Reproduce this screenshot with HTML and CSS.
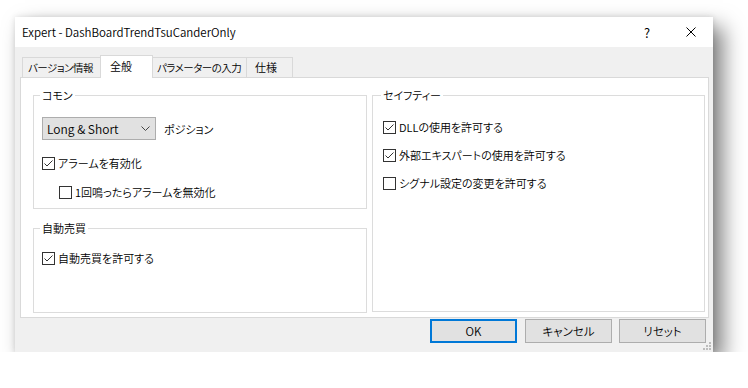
FILE: index.html
```html
<!DOCTYPE html>
<html lang="ja">
<head>
  <meta charset="UTF-8" />
  <title>Expert - DashBoardTrendTsuCanderOnly</title>
  <link rel="stylesheet" href="styles.css">
</head>
<body>
  <div class="dialog">
    <div class="titlebar">
      <span class="title">Expert - DashBoardTrendTsuCanderOnly</span>
      <span class="tb-btn help">?</span>
      <span class="tb-btn close">
        <svg width="10" height="10" viewBox="0 0 10 10"><path d="M0.5 0.5L9.5 9.5M9.5 0.5L0.5 9.5" stroke="#000" stroke-width="1" fill="none"/></svg>
      </span>
    </div>

    <div class="content">
      <div class="tabs">
        <div class="tab tab-version">バージョン情報</div>
        <div class="tab tab-general active">全般</div>
        <div class="tab tab-params">パラメーターの入力</div>
        <div class="tab tab-spec">仕様</div>
      </div>

      <div class="panel">
        <div class="col">
          <div class="group common">
            <div class="group-title">コモン</div>
            <div class="select-row">
              <div class="select">
                <span>Long &amp; Short</span>
                <svg width="9" height="5" viewBox="0 0 9 5"><path d="M0.5 0.5L4.5 4.5L8.5 0.5" stroke="#444" stroke-width="1" fill="none"/></svg>
              </div>
              <span>ポジション</span>
            </div>
            <label class="check row-alarm"><span class="box on"></span>アラームを有効化</label>
            <label class="check row-sub"><span class="box"></span>1回鳴ったらアラームを無効化</label>
          </div>

          <div class="group trade">
            <div class="group-title">自動売買</div>
            <label class="check row-trade"><span class="box on"></span>自動売買を許可する</label>
          </div>
        </div>

        <div class="col">
          <div class="group safety">
            <div class="group-title">セイフティー</div>
            <label class="check row-first"><span class="box on"></span>DLLの使用を許可する</label>
            <label class="check row-next"><span class="box on"></span>外部エキスパートの使用を許可する</label>
            <label class="check row-next"><span class="box"></span>シグナル設定の変更を許可する</label>
          </div>
        </div>
      </div>

      <div class="buttons">
        <button class="btn default">OK</button>
        <button class="btn">キャンセル</button>
        <button class="btn">リセット</button>
      </div>
    </div>

    <svg class="grip" width="8" height="8" viewBox="0 0 8 8">
      <rect x="6" y="0" width="2" height="2" fill="#bcbcbc"/>
      <rect x="3" y="3" width="2" height="2" fill="#bcbcbc"/>
      <rect x="6" y="3" width="2" height="2" fill="#bcbcbc"/>
      <rect x="0" y="6" width="2" height="2" fill="#bcbcbc"/>
      <rect x="3" y="6" width="2" height="2" fill="#bcbcbc"/>
      <rect x="6" y="6" width="2" height="2" fill="#bcbcbc"/>
    </svg>
  </div>
</body>
</html>
```

FILE: styles.css
```css
* {
  box-sizing: border-box;
  margin: 0;
  padding: 0;
}

body {
  background: #ffffff;
  padding: 17px 0 0 15px;
  font-family: 'Noto Sans CJK JP', sans-serif;
  font-size: 11px;
  font-weight: 350;
  font-feature-settings: "palt";
  color: #000;
}

.dialog {
  position: relative;
  width: 698px;
  height: 335px;
  background: #f0f0f0;
  box-shadow: 10px 10px 20px rgba(0, 0, 0, 0.5), 0 0 6px rgba(0, 0, 0, 0.12);
}

.titlebar {
  display: flex;
  align-items: center;
  height: 30px;
  background: #ffffff;
  padding-left: 7px;
}

.title {
  flex: 1;
  font-size: 11.5px;
}

.tb-btn {
  display: flex;
  align-items: center;
  justify-content: center;
  width: 44px;
  height: 30px;
}

.help {
  font-size: 13px;
}

.content {
  padding: 8px 4px 0 5px;
}

.tabs {
  display: flex;
  align-items: flex-end;
  height: 23px;
  padding-left: 3px;
  margin-bottom: -1px;
}

.tab {
  height: 20px;
  line-height: 19px;
  margin-bottom: 1px;
  margin-left: -1px;
  border: 1px solid #d9d9d9;
  border-bottom: none;
  background: #f0f0f0;
  white-space: nowrap;
  font-size: 10.5px;
  letter-spacing: -0.5px;
}

.tab-version {
  width: 79px;
  padding-left: 5px;
}

.tab-general {
  width: 53px;
  padding-left: 9px;
  font-size: 11px;
  letter-spacing: 0;
}

.tab-params {
  width: 96px;
  padding-left: 5px;
  margin-left: -2px;
}

.tab-spec {
  width: 47px;
  padding-left: 8px;
  font-size: 11px;
  letter-spacing: 0;
}

.tab.active {
  position: relative;
  z-index: 1;
  height: 23px;
  line-height: 20px;
  margin-bottom: 0;
  background: #ffffff;
}

.panel {
  display: flex;
  gap: 5px;
  height: 241px;
  background: #ffffff;
  border: 1px solid #d9d9d9;
  padding: 17px 3px 0 12px;
}

.col {
  display: flex;
  flex-direction: column;
  gap: 19px;
}

.col:first-child {
  width: 334px;
}

.col:last-child {
  width: 333px;
}

.group {
  border: 1px solid #dcdcdc;
}

.group.common {
  height: 114px;
  padding-left: 8px;
}

.group.trade {
  height: 85px;
  padding-left: 8px;
}

.group.safety {
  height: 217px;
  padding-left: 10px;
}

.group-title {
  width: fit-content;
  margin: -9px 0 0 -2px;
  padding: 0 2px;
  line-height: 16px;
  background: #ffffff;
}

.select-row {
  display: flex;
  align-items: center;
  gap: 8px;
  margin-top: 14px;
}

.select {
  display: flex;
  align-items: center;
  justify-content: space-between;
  width: 114px;
  height: 23px;
  padding: 0 5px 0 4px;
  background: #e1e1e1;
  border: 1px solid #adadad;
  font-size: 12px;
}

.check {
  display: flex;
  align-items: center;
  gap: 3px;
  height: 16px;
}

.row-alarm {
  margin-top: 15px;
}

.row-sub {
  margin-top: 13px;
  padding-left: 17px;
}

.row-trade {
  margin-top: 14px;
}

.row-first {
  margin-top: 16px;
}

.row-next {
  margin-top: 12px;
}

.box {
  width: 13px;
  height: 13px;
  border: 1px solid #333333;
  background: #ffffff;
  flex-shrink: 0;
}

.box.on {
  background: #ffffff url("data:image/svg+xml;utf8,<svg xmlns='http://www.w3.org/2000/svg' width='11' height='11' viewBox='0 0 11 11'><path d='M1.5 5.5L4 8L9.5 2.5' stroke='%23333' stroke-width='1' fill='none'/></svg>") no-repeat center;
}

.buttons {
  display: flex;
  justify-content: flex-end;
  gap: 7px;
  margin-top: 1px;
  padding-right: 3px;
}

.btn {
  width: 87px;
  height: 24px;
  font-family: inherit;
  font-size: 11.5px;
  font-weight: 350;
  font-feature-settings: "palt";
  background: #e1e1e1;
  border: 1px solid #adadad;
  color: #000;
}

.btn.default {
  border: 2px solid #0078d7;
  margin-right: 1px;
}

.grip {
  position: absolute;
  right: 2px;
  bottom: 2px;
}
```
